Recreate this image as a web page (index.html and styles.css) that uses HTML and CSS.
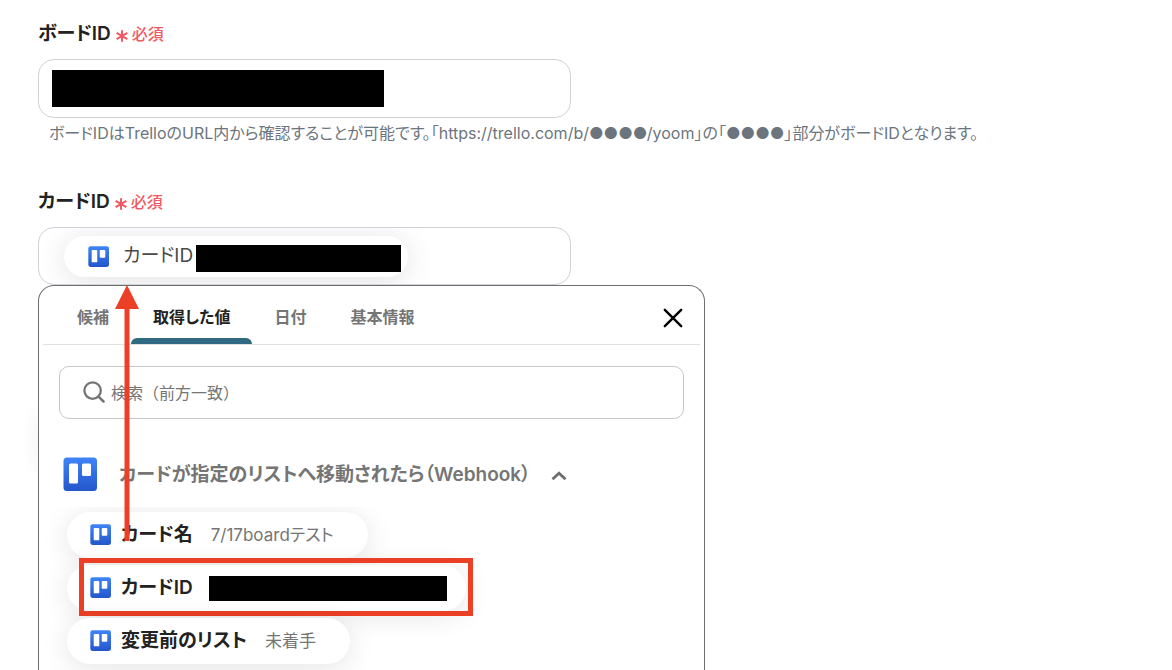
FILE: index.html
```html
<!DOCTYPE html>
<html lang="ja">
<head>
<meta charset="utf-8">
<meta name="viewport" content="width=device-width, initial-scale=1">
<title>Trello</title>
<link rel="stylesheet" href="styles.css">
</head>
<body>
<svg width="0" height="0" class="defs" aria-hidden="true">
  <defs>
    <linearGradient id="blue" x1="0" y1="0" x2="0" y2="1">
      <stop offset="0" stop-color="#3f84f8"/>
      <stop offset="1" stop-color="#2456cb"/>
    </linearGradient>
    <symbol id="trello" viewBox="0 0 34 34">
      <rect x=".5" y=".5" width="33.500" height="33.500" rx="3.5" fill="url(#blue)"/>
      <rect x="6" y="6.500" width="9" height="20" rx="1.5" fill="#fff"/>
      <rect x="19" y="6.500" width="9" height="12.500" rx="1.5" fill="#fff"/>
    </symbol>
    <symbol id="asterisk" viewBox="0 0 12 12">
      <path d="M6 .3v11.4M.6 2.9l10.8 6.2M11.400 2.9L.6 9.1" stroke="currentColor" stroke-width="2" fill="none"/>
    </symbol>
  </defs>
</svg>
<main class="form">
  <section class="field">
    <div class="field-head">
      <label class="field-label" for="board-id">ボードID</label>
      <span class="required"><svg class="star" aria-hidden="true"><use href="#asterisk"/></svg>必須</span>
    </div>
    <div class="control">
      <input class="control-input" id="board-id" type="text">
      <span class="mask mask-board"></span>
    </div>
    <p class="help">ボードIDはTrelloのURL内から確認することが可能です。「https://trello.com/b/●●●●/yoom」の「●●●●」部分がボードIDとなります。</p>
  </section>

  <section class="field field-grow">
    <div class="field-head">
      <label class="field-label" for="card-id">カードID</label>
      <span class="required"><svg class="star" aria-hidden="true"><use href="#asterisk"/></svg>必須</span>
    </div>
    <div class="control control-chips">
      <span class="token">
        <svg class="icon" aria-hidden="true"><use href="#trello"/></svg>
        <span class="token-name">カードID</span>
        <span class="mask mask-token"></span>
      </span>
      <input class="control-input" id="card-id" type="text">
    </div>

    <div class="panel">
      <div class="tabs">
        <div class="tablist" role="tablist">
          <button class="tab" role="tab" type="button">候補</button>
          <button class="tab tab-active" role="tab" type="button" aria-selected="true">取得した値</button>
          <button class="tab" role="tab" type="button">日付</button>
          <button class="tab" role="tab" type="button">基本情報</button>
        </div>
        <button class="close" type="button" aria-label="閉じる">
          <svg class="close-icon" viewBox="0 0 20 20" aria-hidden="true"><path d="M1.8 1.8l16.4 16.4M18.2 1.8L1.8 18.2" stroke="#000" stroke-width="2.4" stroke-linecap="round" fill="none"/></svg>
        </button>
      </div>

      <label class="search">
        <svg class="search-icon" viewBox="0 0 22 22" aria-hidden="true"><circle cx="9.6" cy="9.6" r="8.2" fill="none" stroke="#757575" stroke-width="2.3"/><path d="M15.6 15.6l4.9 4.9" stroke="#757575" stroke-width="2.5" stroke-linecap="round"/></svg>
        <input class="search-input" type="text" placeholder="検索（前方一致）" aria-label="検索">
      </label>

      <button class="group" type="button" aria-expanded="true">
        <svg class="group-icon" aria-hidden="true"><use href="#trello"/></svg>
        <span class="group-name">カードが指定のリストへ移動されたら（Webhook）</span>
        <svg class="chevron" viewBox="0 0 16 10" aria-hidden="true"><path d="M1.5 8.3L8 2.2l6.5 6.1" fill="none" stroke="#6e6e6e" stroke-width="2.8"/></svg>
      </button>

      <div class="values">
        <button class="chip" type="button">
          <svg class="icon" aria-hidden="true"><use href="#trello"/></svg>
          <span class="chip-name">カード名</span>
          <span class="chip-value">7/17boardテスト</span>
        </button>
        <button class="chip chip-masked" type="button">
          <svg class="icon" aria-hidden="true"><use href="#trello"/></svg>
          <span class="chip-name">カードID</span>
          <span class="mask mask-chip"></span>
          <span class="highlight"></span>
        </button>
        <button class="chip" type="button">
          <svg class="icon" aria-hidden="true"><use href="#trello"/></svg>
          <span class="chip-name">変更前のリスト</span>
          <span class="chip-value">未着手</span>
        </button>
      </div>
      <svg class="arrow" viewBox="0 0 24 256" aria-hidden="true"><path d="M12 0l12 24h-9.500v232h-5V24H0z" fill="#eb4026"/></svg>
    </div>
  </section>
</main>
</body>
</html>
```
FILE: styles.css
```css
* { box-sizing: border-box; }

body {
  margin: 0;
  background: #fff;
  color: #222;
  font-family: Inter, "Noto Sans CJK JP", sans-serif;
  font-feature-settings: "palt";
}

button, input { font: inherit; font-feature-settings: inherit; color: inherit; }
button { border: 0; padding: 0; background: none; cursor: pointer; }

.defs { position: absolute; }

.form {
  display: flex;
  flex-direction: column;
  gap: 41px;
  height: 100vh;
  padding: 21px 38px 0;
  overflow: hidden;
}

.field-grow { display: flex; flex: 1; flex-direction: column; }

.field-head {
  display: flex;
  align-items: center;
  gap: 5px;
  height: 26px;
  margin-bottom: 12px;
}
.field-label { font-size: 19px; font-weight: 600; line-height: 26px; }

.required {
  display: flex;
  align-items: center;
  gap: 4px;
  color: #ef5a63;
  font-size: 16px;
  font-weight: 500;
  line-height: 26px;
}
.star { width: 12px; height: 12px; margin-top: 4px; }

.control {
  position: relative;
  display: flex;
  align-items: center;
  width: 100%;
  max-width: 533px;
  height: 59px;
  border: 1px solid #ced2d9;
  border-radius: 16px;
  overflow: hidden;
}
.control-input {
  flex: 1;
  min-width: 0;
  height: 100%;
  padding: 0 13px;
  border: 0;
  outline: 0;
  background: none;
  font-size: 16px;
}
.control-chips { flex: none; height: 58px; padding-left: 25px; }

.mask { display: block; background: #000; }
.mask-board { position: absolute; left: 13px; top: 10px; width: 332px; height: 37px; }
.mask-token { width: 205px; height: 27px; margin-top: 4px; }
.mask-chip { width: 238px; height: 25px; margin-left: 6px; }

.help {
  margin: 0;
  padding-left: 11px;
  color: #6c757d;
  font-size: 16px;
  line-height: 30px;
}

.icon { flex: none; width: 21px; height: 21px; }

.token {
  display: flex;
  flex: none;
  align-items: center;
  height: 41px;
  padding: 0 7px 0 24px;
  border-radius: 21px;
  background: #fff;
  box-shadow: 0 4px 30px rgba(0, 0, 0, .12);
}
.token-name { width: 73px; margin-left: 14px; color: #4a4a4a; font-size: 19px; line-height: 26px; white-space: nowrap; }

.panel {
  position: relative;
  flex: 1;
  width: 100%;
  max-width: 667px;
  padding: 0 4px;
  border: 1px solid #6e6e6e;
  border-bottom: 0;
  border-radius: 16px 16px 0 0;
  background: #fff;
}
.panel::before {
  content: "";
  position: absolute;
  left: -17px;
  top: 110px;
  width: 16px;
  height: 90px;
  background: radial-gradient(ellipse at 100% 50%, rgba(0, 0, 0, .03), transparent 70%);
}

.tabs {
  display: flex;
  align-items: center;
  justify-content: space-between;
  height: 59px;
  padding: 0 17px 0 12px;
  border-bottom: 1px solid #e0e0e0;
}
.tablist { display: flex; height: 58px; }
.tab {
  position: relative;
  padding: 4px 22px 0;
  color: #757575;
  font-size: 16px;
  font-weight: 600;
  line-height: 24px;
}
.tab-active { color: #222; }
.tab-active::after {
  content: "";
  position: absolute;
  inset: auto 0 0;
  height: 6px;
  border-radius: 6px 6px 0 0;
  background: #2f6a82;
}
.close { display: flex; margin-top: 5px; }
.close-icon { width: 20px; height: 20px; }

.search {
  display: flex;
  align-items: center;
  gap: 6px;
  height: 53px;
  margin: 21px 16px 0;
  padding: 0 24px 0 23px;
  border: 1px solid #c6c6c6;
  border-radius: 10px;
}
.search-icon { flex: none; width: 22px; height: 22px; margin-top: -2px; }
.search-input { flex: 1; min-width: 0; padding: 0; border: 0; outline: 0; font-size: 16px; font-feature-settings: normal; }
.search-input::placeholder { color: #757575; opacity: 1; }

.group {
  display: flex;
  align-items: center;
  height: 34px;
  margin: 38px 20px 16px;
  color: #757575;
  font-size: 19px;
  font-weight: 600;
  line-height: 28px;
}
.group-icon { width: 34px; height: 34px; margin-right: 22px; }
.group-name { padding-top: 2px; }
.chevron { width: 16px; height: 10px; margin: 4px 0 0 20px; }

.values {
  display: flex;
  flex-direction: column;
  align-items: flex-start;
  gap: 7px;
  padding: 5px 24px 5px;
  clip-path: inset(0 0 -60px 0);
}
.chip {
  position: relative;
  display: flex;
  align-items: center;
  gap: 10px;
  height: 46px;
  padding: 0 34px 0 23px;
  border-radius: 23px;
  background: #fff;
  box-shadow: 0 4px 28px rgba(0, 0, 0, .11);
}
.chip .icon { margin-bottom: 2px; }
.chip-masked { padding-right: 19px; }
.chip-name { font-size: 19px; font-weight: 600; line-height: 26px; }
.chip-value { margin-left: 8px; color: #757575; font-size: 17px; line-height: 26px; }

.highlight {
  position: absolute;
  inset: -7px -7px -5px 12px;
  border: 5px solid #eb4026;
}

.arrow {
  position: absolute;
  left: 76px;
  top: -1px;
  width: 24px;
  height: 256px;
  pointer-events: none;
}
```
